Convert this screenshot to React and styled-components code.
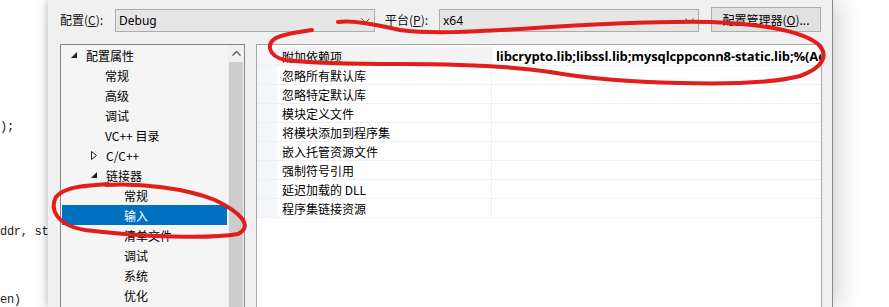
import React from 'react';
import styled, { createGlobalStyle } from 'styled-components';

const GlobalStyle = createGlobalStyle`
  html, body {
    margin: 0;
    padding: 0;
    background: #ffffff;
  }
  body {
    font-family: "Noto Sans", "Noto Sans CJK SC", sans-serif;
    font-size: 12px;
    color: #000000;
  }
`;

const Page = styled.div`
  position: relative;
  display: flex;
  width: 889px;
  height: 307px;
  overflow: hidden;
  background: #ffffff;
`;

// code editor peeking out from behind the dialog
const CodeStrip = styled.div`
  width: 48px;
  flex: none;
  display: flex;
  flex-direction: column;
  overflow: hidden;
  font-family: "Liberation Mono", "Noto Sans CJK SC", monospace;
  font-size: 12px;
  color: #1a1a1a;
`;

const CodeLine = styled.div`
  margin-top: ${p => p.top}px;
  white-space: pre;
  line-height: 14px;
  letter-spacing: -0.3px;
`;

const Dialog = styled.div`
  width: 785px;
  flex: none;
  background: #f0f0f0;
  border-right: 1px solid #8a8a8a;
  box-shadow: -3px 0 5px rgba(0, 0, 0, 0.12), 6px 0 22px rgba(0, 0, 0, 0.18);
  display: flex;
  flex-direction: column;
  padding-left: 5px;
  box-sizing: border-box;
`;

const TopBar = styled.div`
  height: 44px;
  display: flex;
  align-items: flex-start;
  padding: 7px 0 0 7px;
  box-sizing: border-box;
  font-family: "Noto Sans CJK SC", "Noto Sans", sans-serif;
`;

const Label = styled.div`
  width: ${p => p.width}px;
  height: 25px;
  line-height: 25px;
  flex: none;
  font-size: 12px;
  color: #111;
  white-space: nowrap;
`;

const Combo = styled.div`
  width: 260px;
  height: 23px;
  margin-top: 2px;
  margin-right: ${p => p.gap}px;
  box-sizing: border-box;
  border: 1px solid #adadad;
  background: #e6e6e6;
  display: flex;
  align-items: center;
  justify-content: space-between;
  padding: 0 4px 0 3px;
  font-family: "Noto Sans", "Noto Sans CJK SC", sans-serif;
  font-size: 12px;
  color: #000;
`;

const Button = styled.div`
  width: 110px;
  height: 25px;
  box-sizing: border-box;
  border: 1px solid #adadad;
  background: #e1e1e1;
  display: flex;
  align-items: center;
  justify-content: center;
  font-size: 12px;
  color: #000;
  white-space: nowrap;
`;

const Body = styled.div`
  flex: 1;
  display: flex;
  gap: 11px;
  padding-left: 7px;
`;

const TreePanel = styled.div`
  width: 185px;
  flex: none;
  border: 1px solid #828790;
  border-bottom: none;
  background: #f5f5f5;
  display: flex;
  box-sizing: border-box;
`;

const TreeList = styled.div`
  flex: 1;
  padding: 0 1px;
  font-family: "Noto Sans CJK SC", "Noto Sans", sans-serif;
`;

const TreeItem = styled.div`
  height: 20px;
  display: flex;
  align-items: center;
  padding-left: ${p => p.indent}px;
  background: ${p => (p.selected ? '#0070c0' : 'transparent')};
  color: ${p => (p.selected ? '#ffffff' : '#000000')};
  font-size: 12px;
  white-space: nowrap;
`;

const Toggle = styled.span`
  width: 15px;
  flex: none;
  display: flex;
  align-items: center;
`;

const ScrollTrack = styled.div`
  width: 16px;
  flex: none;
  background: #f0f0f0;
  display: flex;
  flex-direction: column;
`;

const ScrollArrow = styled.div`
  height: 17px;
  display: flex;
  align-items: center;
  justify-content: center;
`;

const ScrollThumb = styled.div`
  flex: 1;
  margin: 0 1px;
  background: #cdcdcd;
`;

const Grid = styled.div`
  width: 566px;
  flex: none;
  border: 1px solid #a9a9a9;
  border-bottom: none;
  background: #ffffff;
  padding-top: 2px;
  box-sizing: border-box;
  overflow: hidden;
  display: flex;
  flex-direction: column;
`;

const GridRow = styled.div`
  height: 19px;
  flex: none;
  display: flex;
  box-sizing: border-box;
  border-bottom: 1px solid #eef0f4;
`;

const Gutter = styled.div`
  width: 20px;
  flex: none;
  background: #f4f6f9;
`;

const NameCell = styled.div`
  width: 215px;
  flex: none;
  padding-left: 5px;
  box-sizing: border-box;
  border-right: 1px solid #eef0f4;
  background: ${p => (p.active ? '#f3f3f3' : '#ffffff')};
  display: flex;
  align-items: center;
  font-family: "Noto Sans CJK SC", "Noto Sans", sans-serif;
  font-size: 12px;
  white-space: nowrap;
`;

const ValueCell = styled.div`
  flex: 1;
  padding-left: 4px;
  display: flex;
  align-items: center;
  font-family: "Open Sans", "Noto Sans", sans-serif;
  font-weight: 700;
  font-size: 13px;
  letter-spacing: -0.12px;
  white-space: nowrap;
  overflow: hidden;
`;

const GridFill = styled.div`
  flex: 1;
  display: flex;
`;

const Overlay = styled.svg`
  position: absolute;
  top: 0;
  left: 0;
  pointer-events: none;
`;

const Chevron = () => (
  <svg width="9" height="5" viewBox="0 0 9 5">
    <polyline points="0.5,0.5 4.5,4.5 8.5,0.5" fill="none" stroke="#555" strokeWidth="1" />
  </svg>
);

const Expanded = () => (
  <svg width="6" height="6" viewBox="0 0 6 6">
    <polygon points="0,6 6,6 6,0" fill="#1e1e1e" />
  </svg>
);

const Collapsed = () => (
  <svg width="6" height="9" viewBox="0 0 6 9">
    <polygon points="0.5,0.5 5.5,4.5 0.5,8.5" fill="none" stroke="#1e1e1e" strokeWidth="1" />
  </svg>
);

const tree = [
  { text: '配置属性', indent: 9, toggle: 'open' },
  { text: '常规', indent: 43 },
  { text: '高级', indent: 43 },
  { text: '调试', indent: 43 },
  { text: 'VC++ 目录', indent: 43 },
  { text: 'C/C++', indent: 29, toggle: 'closed' },
  { text: '链接器', indent: 29, toggle: 'open' },
  { text: '常规', indent: 62 },
  { text: '输入', indent: 62, selected: true },
  { text: '清单文件', indent: 62 },
  { text: '调试', indent: 62 },
  { text: '系统', indent: 62 },
  { text: '优化', indent: 62 },
];

const props = [
  { name: '附加依赖项', value: 'libcrypto.lib;libssl.lib;mysqlcppconn8-static.lib;%(Add' },
  { name: '忽略所有默认库' },
  { name: '忽略特定默认库' },
  { name: '模块定义文件' },
  { name: '将模块添加到程序集' },
  { name: '嵌入托管资源文件' },
  { name: '强制符号引用' },
  { name: '延迟加载的 DLL' },
  { name: '程序集链接资源' },
];

const App = () => (
  <>
    <GlobalStyle />
    <Page>
      <CodeStrip>
        <CodeLine top={120}>);</CodeLine>
        <CodeLine top={91}>ddr, st</CodeLine>
        <CodeLine top={54}>en)</CodeLine>
      </CodeStrip>

      <Dialog>
        <TopBar>
          <Label width={55}>配置(<u>C</u>):</Label>
          <Combo gap={10}>
            <span>Debug</span>
            <Chevron />
          </Combo>
          <Label width={54}>平台(<u>P</u>):</Label>
          <Combo gap={12}>
            <span>x64</span>
            <Chevron />
          </Combo>
          <Button>配置管理器(<u>O</u>)...</Button>
        </TopBar>

        <Body>
          <TreePanel>
            <TreeList>
              {tree.map((item, i) => (
                <TreeItem key={i} indent={item.indent} selected={item.selected}>
                  {item.toggle && (
                    <Toggle>{item.toggle === 'open' ? <Expanded /> : <Collapsed />}</Toggle>
                  )}
                  {item.text}
                </TreeItem>
              ))}
            </TreeList>
            <ScrollTrack>
              <ScrollArrow>
                <svg width="9" height="5" viewBox="0 0 9 5">
                  <polyline points="0.5,4.5 4.5,0.5 8.5,4.5" fill="none" stroke="#606060" strokeWidth="1.4" />
                </svg>
              </ScrollArrow>
              <ScrollThumb />
            </ScrollTrack>
          </TreePanel>

          <Grid>
            {props.map((p, i) => (
              <GridRow key={i}>
                <Gutter />
                <NameCell active={i === 0}>{p.name}</NameCell>
                <ValueCell>{p.value}</ValueCell>
              </GridRow>
            ))}
            <GridFill />
          </Grid>
        </Body>
      </Dialog>

      <Overlay width="889" height="307" viewBox="0 0 889 307">
        <g fill="none" stroke="#e31c1c" strokeWidth="4" strokeLinecap="round" strokeLinejoin="round">
          <path d="M338,22 C352,20 372,24 400,30 C430,34 470,32 520,29 C580,25 650,21 710,22 C760,24 800,30 818,44 C830,56 822,68 800,76 C770,84 720,84 680,83 C630,82 590,79 550,72 C510,66 460,64 400,64 C350,64 310,63 285,60 C268,56 266,44 276,38 C286,33 300,32 312,30" />
          <path d="M84,186 L108,184" />
          <path d="M106,185 C140,183 185,188 215,200 C240,212 254,226 238,234 C210,239 140,237 85,230 C55,225 50,208 56,197 C62,190 74,187 86,186" />
        </g>
      </Overlay>
    </Page>
  </>
);

export default App;
